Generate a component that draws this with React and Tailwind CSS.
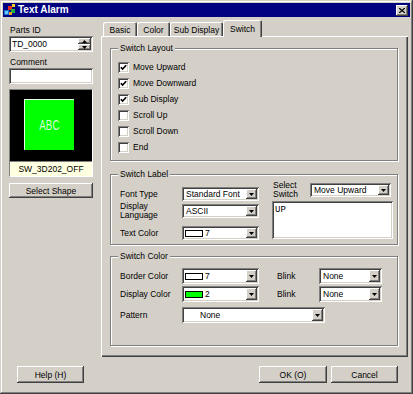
// Text Alarm dialog (classic Windows look)
const raised =
  "shadow-[inset_-1px_-1px_#404040,inset_1px_1px_#fff,inset_-2px_-2px_#808080,inset_2px_2px_#d4d0c8]";
const sunken =
  "shadow-[inset_1px_1px_#808080,inset_-1px_-1px_#fff,inset_2px_2px_#404040,inset_-2px_-2px_#d4d0c8]";

function Arrow() {
  return (
    <svg width="5" height="3" viewBox="0 0 5 3">
      <path d="M0 0h5L2.5 3z" fill="#000" />
    </svg>
  );
}

function Combo({ className = "", textClass = "pl-[2px]", children }) {
  return (
    <div className={`flex bg-white p-[2px] ${sunken} ${className}`}>
      <div className={`flex-1 min-w-0 flex items-center whitespace-nowrap ${textClass}`}>
        {children}
      </div>
      <div className={`w-[11px] flex items-center justify-center bg-[#d4d0c8] ${raised}`}>
        <Arrow />
      </div>
    </div>
  );
}

function Swatch({ color = "bg-white" }) {
  return <span className={`w-[18px] h-[7px] border border-black mr-[2px] ${color}`} />;
}

function Check({ checked, label }) {
  return (
    <div className="h-[16px] flex items-center">
      <div className={`w-[11px] h-[11px] bg-white flex items-center justify-center ${sunken}`}>
        {checked && (
          <svg width="7" height="7" viewBox="0 0 7 7">
            <path d="M0.8 3.2 L2.6 5 L6.2 1.2" fill="none" stroke="#000" strokeWidth="1.6" />
          </svg>
        )}
      </div>
      <span className="ml-[4px]">{label}</span>
    </div>
  );
}

function Group({ title, className = "", children }) {
  return (
    <fieldset
      className={`min-w-0 border border-[#808080] shadow-[inset_1px_1px_#fff,1px_1px_#fff] ${className}`}
    >
      <legend className="ml-[7px] px-[2px] bg-[#d4d0c8] leading-[10px]">{title}</legend>
      {children}
    </fieldset>
  );
}

function Button({ className = "", children }) {
  return (
    <div className={`flex items-center justify-center bg-[#d4d0c8] ${raised} ${className}`}>
      {children}
    </div>
  );
}

function TitleIcon() {
  return (
    <svg width="12" height="12" viewBox="0 0 12 12">
      <rect x="0" y="6" width="5" height="5" fill="#1c6fd8" />
      <rect x="1" y="7" width="3" height="3" fill="#66ccff" />
      <rect x="4" y="2" width="4" height="4" fill="#e03020" />
      <rect x="7" y="5" width="4" height="4" fill="#20b040" />
      <rect x="8" y="0" width="3" height="3" fill="#f0d020" />
      <rect x="5" y="8" width="3" height="3" fill="#f0a020" />
    </svg>
  );
}

export default function App() {
  return (
    <div className="w-[413px] h-[394px] bg-[#d4d0c8] p-[3px] flex flex-col text-black font-['Liberation_Sans',Arial,sans-serif] text-[8.5px] leading-[10px] shadow-[inset_-1px_-1px_#404040,inset_1px_1px_#d4d0c8,inset_-2px_-2px_#808080,inset_2px_2px_#fff]">
      {/* Title bar */}
      <div className="h-[14px] bg-[#000080] flex items-center pl-[1px]">
        <TitleIcon />
        <span className="ml-[2px] text-white font-bold text-[10px]">Text Alarm</span>
        <Button className="ml-auto mr-[2px] w-[12px] h-[11px]">
          <svg width="6" height="5" viewBox="0 0 6 5">
            <path d="M0 0L6 5M6 0L0 5" stroke="#000" strokeWidth="1.3" />
          </svg>
        </Button>
      </div>

      <div className="flex h-[340px]">
        {/* Left column */}
        <div className="ml-[6px] w-[84px] flex flex-col">
          <div className="mt-[8px] pl-[1px]">Parts ID</div>
          <div className={`mt-[1px] h-[16px] flex bg-white p-[2px] ${sunken}`}>
            <div className="flex-1 flex items-center pl-[1px]">TD_0000</div>
            <div className="w-[13px] flex flex-col">
              <div className={`flex-1 flex items-center justify-center bg-[#d4d0c8] ${raised}`}>
                <svg width="5" height="3" viewBox="0 0 5 3">
                  <path d="M0 3h5L2.5 0z" fill="#000" />
                </svg>
              </div>
              <div className={`flex-1 flex items-center justify-center bg-[#d4d0c8] ${raised}`}>
                <Arrow />
              </div>
            </div>
          </div>
          <div className="mt-[5px] pl-[1px]">Comment</div>
          <div className={`mt-[1px] h-[16px] bg-white ${sunken}`} />

          <div className="mt-[5px] border border-[#808080] border-r-white border-b-white">
            <div className="h-[71px] bg-black pt-[9px] pl-[14px]">
              <div className="w-[50px] h-[51px] bg-[#00ff00] border-t border-l border-[#e8ffe8] flex items-center justify-center">
                <span className="text-[14px] leading-[14px] text-[#d8ffd8] scale-x-[0.7]">ABC</span>
              </div>
            </div>
            <div className="h-[15px] bg-[#ffffe1] border-t border-[#808080] flex items-center justify-center">
              SW_3D202_OFF
            </div>
          </div>
          <Button className="mt-[6px] h-[15px] shadow-[inset_-1px_-1px_#000,inset_1px_1px_#fff,inset_-2px_-2px_#808080,inset_2px_2px_#d4d0c8]">
            Select Shape
          </Button>
        </div>

        {/* Tabs */}
        <div className="ml-auto mr-[2px] w-[307px] flex flex-col pt-[3px]">
          <div className="h-[16px] flex items-end pl-[2px]">
            {[
              ["Basic", "w-[34px]"],
              ["Color", "w-[33px]"],
              ["Sub Display", "w-[53px]"],
            ].map(([t, w]) => (
              <div
                key={t}
                className={`${w} h-[14px] pt-[2px] flex items-center justify-center rounded-t-[2px] shadow-[inset_1px_1px_#fff,inset_-1px_0_#404040,inset_-2px_0_#808080]`}
              >
                {t}
              </div>
            ))}
            <div className="relative z-10 -mb-px w-[39px] h-[17px] bg-[#d4d0c8] flex items-center justify-center rounded-t-[2px] shadow-[inset_1px_1px_#fff,inset_-1px_0_#404040,inset_-2px_0_#808080]">
              Switch
            </div>
          </div>

          <div className="h-[321px] pl-[9px] pr-[10px] pt-[7px] shadow-[inset_1px_1px_#fff,inset_-1px_-1px_#404040,inset_-2px_-2px_#808080]">
            <Group title="Switch Layout">
              <div className="pl-[7px] pt-[6px] pb-[5px]">
                <Check checked label="Move Upward" />
                <Check checked label="Move Downward" />
                <Check checked label="Sub Display" />
                <Check label="Scroll Up" />
                <Check label="Scroll Down" />
                <Check label="End" />
              </div>
            </Group>

            <Group title="Switch Label" className="mt-[8px]">
              <div className="flex pl-[9px] pt-[4px] pb-[4px]">
                <div className="mt-[4px] flex flex-col">
                  <div className="h-[14px] flex items-center">
                    <span className="w-[62px]">Font Type</span>
                    <Combo className="w-[77px] h-[14px]">Standard Font</Combo>
                  </div>
                  <div className="mt-[3px] h-[14px] flex items-center">
                    <span className="w-[62px] leading-[9px]">
                      Display
                      <br />
                      Language
                    </span>
                    <Combo className="w-[77px] h-[14px]">ASCII</Combo>
                  </div>
                  <div className="mt-[8px] h-[14px] flex items-center">
                    <span className="w-[62px]">Text Color</span>
                    <Combo className="w-[77px] h-[14px]" textClass="pl-[1px]">
                      <Swatch />7
                    </Combo>
                  </div>
                </div>
                <div className="ml-[13px] w-[121px] flex flex-col">
                  <div className="h-[14px] flex items-center">
                    <span className="w-[38px] pl-[1px] leading-[9px]">
                      Select
                      <br />
                      Switch
                    </span>
                    <Combo className="w-[81px] h-[14px]">Move Upward</Combo>
                  </div>
                  <div
                    className={`mt-[4px] h-[38px] bg-white p-[2px] pl-[3px] pt-[4px] font-['Liberation_Mono',monospace] text-[9px] ${sunken}`}
                  >
                    UP
                  </div>
                </div>
              </div>
            </Group>

            <Group title="Switch Color" className="mt-[6px]">
              <div className="pl-[9px] pt-[7px] pb-[22px] flex flex-col">
                <div className="h-[16px] flex items-center">
                  <span className="w-[62px]">Border Color</span>
                  <Combo className="w-[77px] h-[16px]" textClass="pl-[1px]">
                    <Swatch />7
                  </Combo>
                  <span className="ml-[18px] w-[42px]">Blink</span>
                  <Combo className="w-[63px] h-[16px]">None</Combo>
                </div>
                <div className="mt-[2px] h-[16px] flex items-center">
                  <span className="w-[62px]">Display Color</span>
                  <Combo className="w-[77px] h-[16px]" textClass="pl-[1px]">
                    <Swatch color="bg-[#00ff00]" />2
                  </Combo>
                  <span className="ml-[18px] w-[42px]">Blink</span>
                  <Combo className="w-[63px] h-[16px]">None</Combo>
                </div>
                <div className="mt-[5px] h-[16px] flex items-center">
                  <span className="w-[62px]">Pattern</span>
                  <Combo className="w-[143px] h-[16px]" textClass="pl-[16px]">
                    None
                  </Combo>
                </div>
              </div>
            </Group>
          </div>
        </div>
      </div>

      {/* Bottom buttons */}
      <div className="mt-[9px] h-[17px] flex">
        <Button className="ml-[14px] w-[67px]">Help (H)</Button>
        <Button className="ml-auto w-[68px]">OK (O)</Button>
        <Button className="ml-[4px] mr-[12px] w-[67px]">Cancel</Button>
      </div>
    </div>
  );
}
